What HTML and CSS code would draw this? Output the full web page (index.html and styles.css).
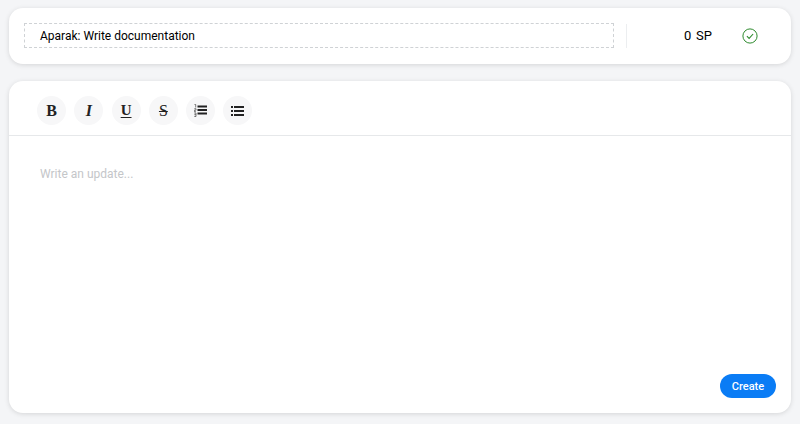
FILE: index.html
```html
<!DOCTYPE html>
<html lang="en">
<head>
<meta charset="utf-8">
<title>Write documentation</title>
<link rel="stylesheet" href="styles.css">
</head>
<body>
<main class="page">
  <section class="card head">
    <div class="title">Aparak: Write documentation</div>
    <div class="meta">
      <span class="points">0</span>
      <span class="unit">SP</span>
      <svg class="check" width="16" height="16" viewBox="0 0 16 16" aria-hidden="true">
        <circle cx="8" cy="8" r="7.1" fill="none" stroke="#2e8b2e" stroke-width="1"/>
        <path d="M4.9 8.200l2.200 2.200 4-4.400" fill="none" stroke="#2e8b2e" stroke-width="1.100"/>
      </svg>
    </div>
  </section>
  <section class="card editor">
    <div class="toolbar">
      <button class="tool serif bold">B</button>
      <button class="tool serif italic">I</button>
      <button class="tool serif under">U</button>
      <button class="tool serif strike">S</button>
      <button class="tool">
        <svg width="13" height="13" viewBox="0 0 13 13" aria-hidden="true">
          <path d="M3.500 2.500h9.500M3.500 6h9.500M3.500 9.500h9.500" stroke="#222" stroke-width="1.800" fill="none"/>
          <path d="M.500 .500h1.200v3M.300 4.700h1.700v1.500h-1.700v1.500h1.700M.300 9h1.700v3.500h-1.700M.300 10.700h1.700" stroke="#444" stroke-width=".7" fill="none"/>
        </svg>
      </button>
      <button class="tool">
        <svg width="13" height="10" viewBox="0 0 13 10" aria-hidden="true">
          <path d="M3 1h10M3 5h10M3 9h10M0 1h2M0 5h2M0 9h2" stroke="#222" stroke-width="1.800" fill="none"/>
        </svg>
      </button>
    </div>
    <div class="body">
      <div class="placeholder">Write an update...</div>
      <div class="actions"><button class="create">Create</button></div>
    </div>
  </section>
</main>
</body>
</html>
```
FILE: styles.css
```css
* { box-sizing: border-box; }
html, body { height: 100%; }
body {
  margin: 0;
  background: #f4f5f7;
  font-family: Roboto, "Liberation Sans", sans-serif;
  color: #000;
  overflow: hidden;
}
.page {
  display: flex;
  flex-direction: column;
  gap: 17px;
  padding: 8px 9px 11px;
  height: 424px;
}
.card {
  background: #fff;
  border-radius: 14px;
  box-shadow: 0 1px 5px rgba(0, 0, 0, .13);
}
.head {
  display: flex;
  align-items: center;
  height: 56px;
  padding: 0 33px 1px 15px;
}
.title {
  flex: 0 0 590px;
  height: 25px;
  padding-left: 15px;
  border: 1px dashed #cfd2d5;
  font-size: 12px;
  line-height: 24px;
}
.meta {
  flex: 1;
  display: flex;
  align-items: center;
  margin-left: 12px;
  height: 24px;
  padding-left: 57px;
  border-left: 1px solid #eceef0;
  font-size: 13px;
}
.points { width: 12px; }
.unit { width: 46px; }
.check { display: block; }
.editor {
  flex: 1;
  display: flex;
  flex-direction: column;
}
.toolbar {
  display: flex;
  gap: 8.300px;
  height: 55px;
  padding: 15px 0 0 28px;
  border-bottom: 1px solid #e6e8ea;
}
.tool {
  display: flex;
  align-items: center;
  justify-content: center;
  width: 29px;
  height: 29px;
  padding: 0;
  border: 0;
  border-radius: 50%;
  background: #f7f7f8;
  color: #222;
  font-size: 16px;
}
.serif { font-family: "Liberation Serif", serif; }
.bold { font-weight: 700; }
.italic { font-style: italic; font-weight: 700; }
.under {
  font-size: 15px;
  font-weight: 700;
  text-decoration: underline;
  text-underline-offset: 2px;
}
.strike { text-decoration: line-through; }
.body {
  flex: 1;
  display: flex;
  flex-direction: column;
  justify-content: space-between;
  padding: 30px 15px 15px 31px;
}
.placeholder {
  color: #c4c6c9;
  font-size: 12px;
  line-height: 16px;
}
.actions {
  display: flex;
  justify-content: flex-end;
}
.create {
  width: 56px;
  height: 24px;
  padding: 0;
  border: 0;
  border-radius: 12px;
  background: #0a7cf5;
  color: #fff;
  font: 500 11px Roboto, sans-serif;
}
```
